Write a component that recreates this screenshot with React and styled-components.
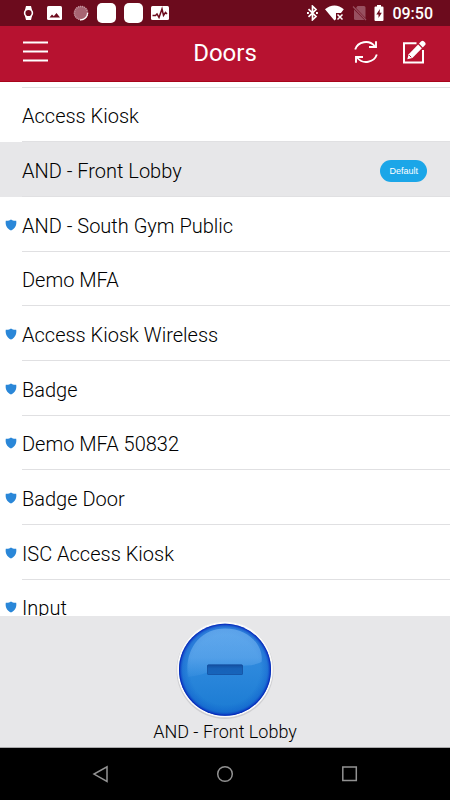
import React, { useState } from "react";
import styled, { createGlobalStyle } from "styled-components";

const GlobalStyle = createGlobalStyle`
  *, *::before, *::after { box-sizing: border-box; }
  body {
    margin: 0;
    background: #fff;
    font-family: Roboto, "Liberation Sans", sans-serif;
    color: #000;
  }
  button { font: inherit; color: inherit; border: 0; padding: 0; background: none; cursor: pointer; }
`;

const Screen = styled.div`
  height: 100vh;
  display: flex;
  flex-direction: column;
`;

const StatusBar = styled.div`
  flex: none;
  height: 26px;
  padding: 0 17px 0 21px;
  display: flex;
  align-items: center;
  justify-content: space-between;
  background: #6c0b1d;
  color: #fff;
`;

const StatusGroup = styled.div`
  display: flex;
  align-items: center;
  gap: ${(p) => p.$gap}px;
  svg { display: block; flex: none; }
`;

const Clock = styled.time`
  padding-top: 2px;
  font-size: 16px;
  line-height: 24px;
  font-weight: 500;
`;

const Header = styled.header`
  flex: none;
  height: 56px;
  padding: 0 21px 3px;
  display: grid;
  grid-template-columns: 1fr auto 1fr;
  align-items: center;
  background: #b71230;
  border-bottom: 1px solid #a8041a;
  color: #fff;
`;

const Title = styled.h1`
  margin: 0;
  padding-top: 2px;
  font-size: 24px;
  line-height: 30px;
  font-weight: 400;
`;

const Actions = styled.div`
  display: flex;
  gap: 18px;
  justify-content: ${(p) => (p.$end ? "flex-end" : "flex-start")};
`;

const IconButton = styled.button`
  width: 30px;
  height: 30px;
  display: grid;
  place-items: center;
  svg { display: block; }
`;

const List = styled.ul`
  flex: 1;
  min-height: 0;
  margin: 0;
  padding: 5px 0 0;
  list-style: none;
  overflow-y: auto;
  scrollbar-width: none;
  background: #fff;
  &::before {
    content: "";
    display: block;
    height: 1px;
    margin-left: 22px;
    background: #e0e0e2;
  }
`;

const Row = styled.li`
  height: 55px;
  background: ${(p) => (p.$selected ? "#e7e7e9" : "#fff")};
  &:nth-child(3n + 1) { height: 54px; }
`;

const RowButton = styled.button`
  width: 100%;
  height: 100%;
  display: grid;
  grid-template-columns: 22px 1fr;
  text-align: left;
`;

const Marker = styled.span`
  display: grid;
  place-items: center;
  svg { display: block; }
`;

const RowBody = styled.span`
  display: flex;
  align-items: center;
  justify-content: space-between;
  padding: 3px 23px 0 0;
  border-bottom: 1px solid #e0e0e2;
  font-size: 20px;
  line-height: 24px;
  font-weight: 350;
`;

const Badge = styled.span`
  height: 22px;
  padding: 0 9px;
  border-radius: 11px;
  background: #1ba6e8;
  color: #fff;
  font-family: "Liberation Sans", Arial, sans-serif;
  font-size: 9px;
  line-height: 22px;
  font-weight: 400;
`;

const Panel = styled.footer`
  flex: none;
  height: 132px;
  padding-top: 4px;
  display: flex;
  flex-direction: column;
  align-items: center;
  background: #e7e7e9;
  border-bottom: 1px solid #a9a9ab;
`;

const UnlockButton = styled.button`
  display: block;
  svg { display: block; }
`;

const PanelLabel = styled.div`
  font-size: 18px;
  line-height: 24px;
  font-weight: 350;
`;

const NavBar = styled.nav`
  flex: none;
  height: 52px;
  padding: 0 38px;
  display: grid;
  grid-template-columns: repeat(3, 1fr);
  align-items: center;
  justify-items: center;
  background: #000;
`;

const ShieldIcon = () => (
  <svg width="12" height="12" viewBox="0 0 12 12" aria-label="Secured">
    <path d="M6 .4C7.300 1.500 9 2 11.200 1.800 11.900 6 10.200 9.700 6 11.600 1.800 9.700.1 6 .8 1.800 3 2 4.700 1.500 6 .4Z" fill="#2a87d8" />
  </svg>
);

const WatchIcon = () => (
  <svg width="15" height="16" viewBox="0 0 15 16">
    <path d="M5 1h5l1 4v6l-1 4H5l-1-4V5Z" fill="#fff" />
    <circle cx="7.500" cy="8" r="4.700" fill="#fff" />
    <circle cx="7.500" cy="8" r="3.100" fill="#6c0b1d" />
  </svg>
);

const PhotoIcon = () => (
  <svg width="15" height="16" viewBox="0 0 15 16">
    <rect y="1" width="15" height="14" rx="1.500" fill="#fff" />
    <path d="M2.500 12.500 5 9.500l1.800 1.800L9.500 8l3.500 4.500Z" fill="#6c0b1d" />
  </svg>
);

const SpinnerIcon = () => (
  <svg width="16" height="16" viewBox="0 0 16 16">
    <circle cx="8" cy="8" r="7" fill="#a76472" />
    <circle cx="8" cy="8" r="6.600" fill="none" stroke="#c79aa4" strokeWidth="1.500" strokeDasharray="1 1" />
    <path d="M14.600 8A7 7 0 0 1 7 14.800" fill="none" stroke="#fff" strokeWidth="1.200" />
  </svg>
);

const TileIcon = () => (
  <svg width="19" height="20" viewBox="0 0 19 20">
    <rect width="19" height="20" rx="5" fill="#fff" />
  </svg>
);

const PulseIcon = () => (
  <svg width="18" height="16" viewBox="0 0 18 16">
    <rect y="1" width="18" height="14" rx="1.500" fill="#fff" />
    <path d="M1.500 10.500h3l1.500-1.500 2 3.500 3-8.500 1.500 6.500 2-3 1.500 1.500" fill="none" stroke="#6c0b1d" strokeWidth="1.500" />
  </svg>
);

const BluetoothIcon = () => (
  <svg width="11" height="16" viewBox="0 0 11 16">
    <path d="M1.500 4.200 9 11.500 5.500 14.800V1.200L9 4.500 1.500 11.800" fill="none" stroke="#fff" strokeWidth="1.700" />
    <path d="M0 7h1.900v2H0ZM9 7h1.900v2H9Z" fill="#fff" />
  </svg>
);

const WifiIcon = () => (
  <svg width="20" height="16" viewBox="0 0 20 16">
    <path d="M0 4.200C5.500-.9 13.500-.9 18.800 4.200L16 8h-5v6.300l-1.600 1.200Z" fill="#fff" />
    <path d="m12.500 9.500 5 5m0-5-5 5" stroke="#fff" strokeWidth="1.500" />
  </svg>
);

const NoSimIcon = () => (
  <svg width="15" height="16" viewBox="0 0 15 16">
    <path d="M5.500 1H12q1.500 0 1.500 1.500V13L4 3Z" fill="#985060" />
    <path d="M2 4.500 12.500 15H3.500Q2 15 2 13.500Z" fill="#985060" />
    <path d="m1 1.500 13 13.500" stroke="#985060" strokeWidth="1.200" />
  </svg>
);

const BatteryIcon = () => (
  <svg width="10" height="16" viewBox="0 0 10 16">
    <path d="M3 0h4v1.600h1.500q1 0 1 1V15q0 1-1 1h-7q-1 0-1-1V2.600q0-1 1-1H3Z" fill="#fff" />
    <path d="M5.900 4 2.300 9.500h2.200V13l3.300-5.300H5.600Z" fill="#6c0b1d" />
  </svg>
);

const MenuIcon = () => (
  <svg width="26" height="24" viewBox="0 0 26 24">
    <path d="M0 2.500h25M0 11.500h25M0 20.500h25" stroke="#fff" strokeWidth="2.200" />
  </svg>
);

const RefreshIcon = () => (
  <svg width="24" height="24" viewBox="0 0 24 24" fill="none" stroke="#fff" strokeWidth="1.900">
    <path d="M1.200 9.500A11.200 10.500 0 0 1 20.600 6" />
    <path d="M22 1.200V7H15" />
    <path d="M22.800 14.500A11.200 10.500 0 0 1 3.400 18" />
    <path d="M2 22.800V17H9" />
  </svg>
);

const EditIcon = () => (
  <svg width="24" height="24" viewBox="0 0 24 24">
    <path d="M14.500 3.200H2V22.500H21V10" fill="none" stroke="#fff" strokeWidth="2" />
    <path d="m5.300 19.300 1.400-5.100L16.100 4.500l3.800 3.800-9.500 9.600Z" fill="#fff" />
    <path d="m17 3.600 2.300-2.300q1.200-1 2.500 0l1.300 1.300q1 1.300 0 2.500L20.800 7.400Z" fill="#fff" />
    <path d="m7.200 15.200 2.100 2.100" stroke="#b71230" strokeWidth="1" />
  </svg>
);

const UnlockGraphic = () => (
  <svg width="100" height="100" viewBox="0 0 100 100">
    <defs>
      <linearGradient id="face" x1="0" y1="0" x2="0" y2="1">
        <stop offset="0" stopColor="#3b8fe2" />
        <stop offset=".5" stopColor="#2c88dc" />
        <stop offset="1" stopColor="#1a7ad2" />
      </linearGradient>
      <radialGradient id="edge">
        <stop offset=".76" stopColor="#0a5ac8" stopOpacity="0" />
        <stop offset=".92" stopColor="#0a50c8" stopOpacity=".34" />
        <stop offset=".96" stopColor="#0836c0" stopOpacity=".6" />
        <stop offset="1" stopColor="#0218b4" />
      </radialGradient>
      <linearGradient id="gloss" x1="0" y1="0" x2="0" y2="1">
        <stop offset="0" stopColor="#76b6f2" stopOpacity=".65" />
        <stop offset=".6" stopColor="#74b4f2" stopOpacity=".5" />
        <stop offset="1" stopColor="#6db2f2" stopOpacity=".1" />
      </linearGradient>
      <linearGradient id="slot" x1="0" y1="0" x2="0" y2="1">
        <stop offset="0" stopColor="#124fa0" />
        <stop offset=".4" stopColor="#1762b8" />
        <stop offset="1" stopColor="#1765bb" />
      </linearGradient>
    </defs>
    <circle cx="50" cy="50.500" r="48.500" fill="#cfcfd2" />
    <circle cx="50" cy="49.500" r="47.800" fill="#fafafa" />
    <circle cx="50" cy="49.700" r="46" fill="url(#face)" />
    <circle cx="50" cy="49.700" r="46" fill="url(#edge)" />
    <path d="M13 57C9 30 25 8.500 50 8.500S89 27 86.500 42C73 49 58 42 38 50 29 54 22 56 13 57Z" fill="url(#gloss)" />
    <rect x="32" y="44.500" width="36" height="10.500" rx="1.500" fill="url(#slot)" />
    <rect x="32.500" y="45" width="35" height="9.500" rx="1" fill="none" stroke="#164f9d" strokeOpacity=".6" />
  </svg>
);

const BackIcon = () => (
  <svg width="18" height="18" viewBox="0 0 18 18" fill="none" stroke="#929292" strokeWidth="1.500">
    <path d="M16 1.800v14.600L3 9.100Z" />
  </svg>
);

const HomeIcon = () => (
  <svg width="18" height="18" viewBox="0 0 18 18" fill="none" stroke="#929292" strokeWidth="1.500">
    <circle cx="9" cy="9" r="7.300" />
  </svg>
);

const RecentIcon = () => (
  <svg width="18" height="18" viewBox="0 0 18 18" fill="none" stroke="#929292" strokeWidth="1.500">
    <rect x="1.800" y="2" width="13.500" height="13.500" />
  </svg>
);

const doors = [
  { name: "Access Kiosk" },
  { name: "AND - Front Lobby", isDefault: true },
  { name: "AND - South Gym Public", secured: true },
  { name: "Demo MFA" },
  { name: "Access Kiosk Wireless", secured: true },
  { name: "Badge", secured: true },
  { name: "Demo MFA 50832", secured: true },
  { name: "Badge Door", secured: true },
  { name: "ISC Access Kiosk", secured: true },
  { name: "Input", secured: true },
];

export default function App() {
  const [selected, setSelected] = useState("AND - Front Lobby");

  return (
    <>
      <GlobalStyle />
      <Screen>
        <StatusBar>
          <StatusGroup $gap={8}>
            <StatusGroup $gap={11}>
              <WatchIcon />
              <PhotoIcon />
              <SpinnerIcon />
            </StatusGroup>
            <StatusGroup $gap={8}>
              <TileIcon />
              <TileIcon />
              <PulseIcon />
            </StatusGroup>
          </StatusGroup>
          <StatusGroup $gap={7}>
            <BluetoothIcon />
            <WifiIcon />
            <NoSimIcon />
            <StatusGroup $gap={8}>
              <BatteryIcon />
              <Clock>09:50</Clock>
            </StatusGroup>
          </StatusGroup>
        </StatusBar>

        <Header>
          <Actions>
            <IconButton aria-label="Menu"><MenuIcon /></IconButton>
          </Actions>
          <Title>Doors</Title>
          <Actions $end>
            <IconButton aria-label="Refresh"><RefreshIcon /></IconButton>
            <IconButton aria-label="Edit"><EditIcon /></IconButton>
          </Actions>
        </Header>

        <List>
          {doors.map((door) => (
            <Row key={door.name} $selected={door.name === selected}>
              <RowButton onClick={() => setSelected(door.name)}>
                <Marker>{door.secured && <ShieldIcon />}</Marker>
                <RowBody>
                  {door.name}
                  {door.isDefault && <Badge>Default</Badge>}
                </RowBody>
              </RowButton>
            </Row>
          ))}
        </List>

        <Panel>
          <UnlockButton aria-label={`Unlock ${selected}`}><UnlockGraphic /></UnlockButton>
          <PanelLabel>{selected}</PanelLabel>
        </Panel>

        <NavBar>
          <IconButton aria-label="Back"><BackIcon /></IconButton>
          <IconButton aria-label="Home"><HomeIcon /></IconButton>
          <IconButton aria-label="Recent apps"><RecentIcon /></IconButton>
        </NavBar>
      </Screen>
    </>
  );
}
